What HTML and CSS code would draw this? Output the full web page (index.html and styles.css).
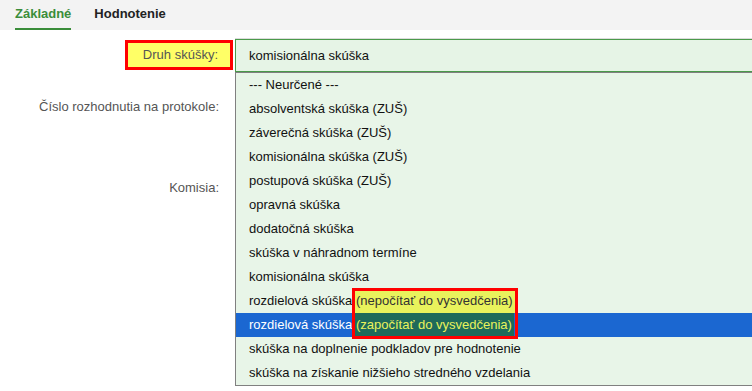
FILE: index.html
```html
<!DOCTYPE html>
<html lang="sk">
<head>
    <meta charset="UTF-8">
    <title>Skúška</title>
    <link rel="stylesheet" href="styles.css">
</head>
<body>
    <section class="tabs">
        <span class="tab tab-active">Základné</span>
        <span class="tab">Hodnotenie</span>
    </section>

    <section class="form">
        <section class="form-label label-first">
            <span class="label-mark">Druh skúšky:</span>
        </section>
        <section class="form-field">
            <section class="select">
                <span>komisionálna skúška</span>
            </section>
            <!-- open dropdown -->
            <section class="dropdown">
                <div class="option">--- Neurčené ---</div>
                <div class="option">absolventská skúška (ZUŠ)</div>
                <div class="option">záverečná skúška (ZUŠ)</div>
                <div class="option">komisionálna skúška (ZUŠ)</div>
                <div class="option">postupová skúška (ZUŠ)</div>
                <div class="option">opravná skúška</div>
                <div class="option">dodatočná skúška</div>
                <div class="option">skúška v náhradnom termíne</div>
                <div class="option">komisionálna skúška</div>
                <div class="option">rozdielová skúška <span class="note">(nepočítať do vysvedčenia)</span></div>
                <div class="option option-selected">rozdielová skúška <span class="note">(započítať do vysvedčenia)</span></div>
                <div class="option">skúška na doplnenie podkladov pre hodnotenie</div>
                <div class="option">skúška na získanie nižšieho stredného vzdelania</div>
                <div class="note-frame"></div>
            </section>
        </section>

        <section class="form-label label-tall">
            <span>Číslo rozhodnutia na protokole:</span>
        </section>
        <section class="form-field"></section>

        <section class="form-label label-last">
            <span>Komisia:</span>
        </section>
        <section class="form-field"></section>
    </section>
</body>
</html>
```

FILE: styles.css
```css
html {
    height: 100%;
}

body {
    margin: 0;
    padding: 0;
    min-height: 100%;
    font-family: "Liberation Sans", Arial, sans-serif;
    font-size: 13px;
    color: #222;
    background: #fff;
}

.tabs {
    height: 30px;
    background-color: #f3f3f3;
    display: flex;
    gap: 23px;
    padding-left: 15px;
    box-sizing: border-box;
}

.tab {
    font-weight: 700;
    line-height: 28px;
    border-bottom: 2px solid transparent;
    color: #222;
}

.tab-active {
    color: #3a8d3a;
    border-bottom-color: #3a8d3a;
}

.form {
    display: grid;
    grid-template-columns: 235px 1fr;
    padding-top: 8px;
}

.form-label {
    display: flex;
    justify-content: flex-end;
    align-items: center;
    padding-right: 16px;
    color: #555;
}

.label-first {
    height: 34px;
}

.label-mark {
    background-color: #ffff66;
    border: 3px solid #ff0000;
    padding: 0 12px 0 15px;
    line-height: 24px;
    margin-right: -14px;
}

.label-tall {
    height: 68px;
}

.label-last {
    height: 94px;
}

.form-field {
    position: relative;
}

.select {
    border-top: 1px solid #dcdcdc;
}

.select span {
    display: block;
    height: 31px;
    line-height: 32px;
    padding-left: 13px;
    background-color: #e6f4e6;
    border: 1px solid #4a9a4a;
    border-right: none;
    color: #111;
}

.dropdown {
    position: absolute;
    top: 34px;
    left: 0;
    right: 0;
    border-left: 1px solid #808080;
    border-top: 1px solid #808080;
    border-bottom: 1px solid #808080;
    background-color: #e8f5e8;
    z-index: 2;
}

.option {
    height: 24px;
    line-height: 24px;
    padding-left: 13px;
    color: #111;
    white-space: nowrap;
}

.option-selected {
    background-color: #1b67d1;
    color: #fff;
}

.note {
    display: inline-block;
    height: 24px;
    background-color: #e9f25c;
    color: #333;
    padding: 0 2px;
    margin-left: -2px;
}

.option-selected .note {
    background-color: #1e6a5a;
    color: #e9f25c;
}

.note-frame {
    position: absolute;
    left: 116px;
    top: 215px;
    width: 160px;
    height: 45px;
    border: 3px solid #ff0000;
}
```
